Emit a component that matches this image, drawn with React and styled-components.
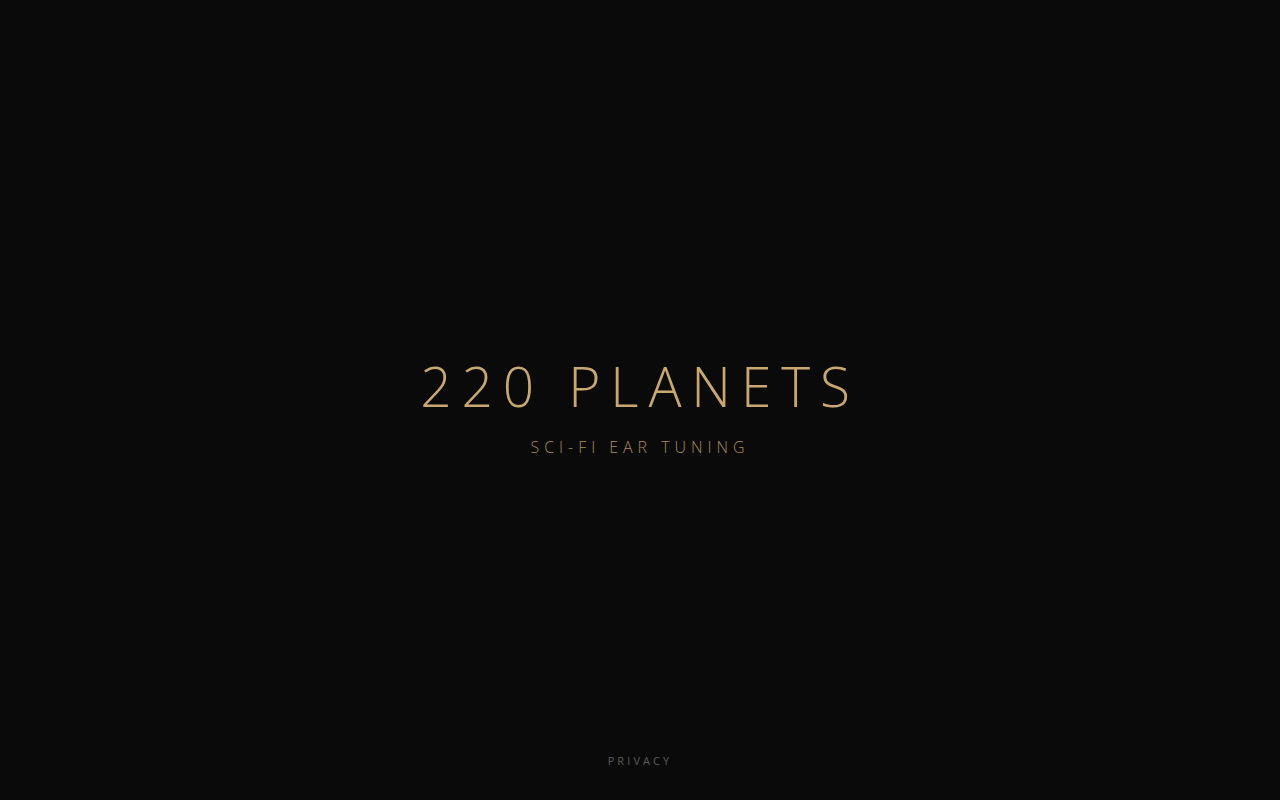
import React from 'react';
import styled, { createGlobalStyle } from 'styled-components';

const GlobalStyle = createGlobalStyle`
  html, body {
    margin: 0;
    padding: 0;
    background: #0a0a0a;
  }
  body {
    font-family: "Open Sans", "Noto Sans", sans-serif;
  }
`;

const Page = styled.div`
  min-height: 100vh;
  display: flex;
  flex-direction: column;
  align-items: center;
  background: #0a0a0a;
`;

const Hero = styled.main`
  flex: 1;
  display: flex;
  flex-direction: column;
  align-items: center;
  justify-content: center;
  padding-top: 68px;
`;

const Title = styled.h1`
  margin: 0;
  font-size: 55px;
  font-weight: 300;
  letter-spacing: 0.18em;
  color: #c9a771;
  line-height: 1;
`;

const Tagline = styled.p`
  margin: 23px 0 0;
  font-size: 16px;
  font-weight: 300;
  letter-spacing: 0.31em;
  color: #a88a5c;
`;

const Footer = styled.footer`
  padding-bottom: 30px;
`;

const FooterLink = styled.a`
  font-size: 11px;
  letter-spacing: 0.28em;
  color: #5a5a5a;
  text-decoration: none;
  cursor: pointer;
`;

const App = () => {
  return (
    <Page>
      <GlobalStyle />
      <Hero>
        <Title>220 PLANETS</Title>
        <Tagline>SCI-FI EAR TUNING</Tagline>
      </Hero>
      <Footer>
        <FooterLink>PRIVACY</FooterLink>
      </Footer>
    </Page>
  );
};

export default App;
